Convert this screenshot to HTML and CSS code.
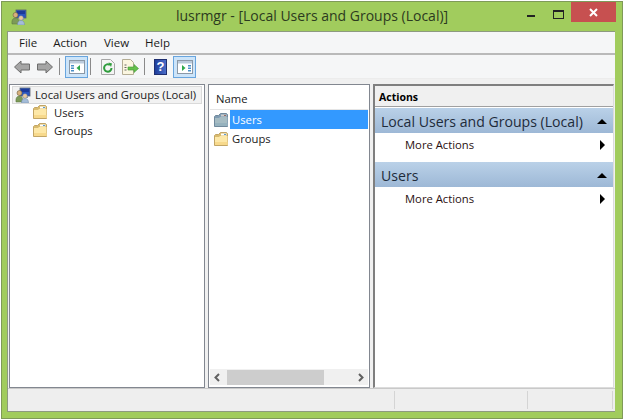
FILE: index.html
```html
<!DOCTYPE html>
<html lang="en">
<head>
    <meta charset="UTF-8">
    <title>lusrmgr</title>
    <link rel="stylesheet" href="styles.css">
</head>
<body>
    <svg class="defs" width="0" height="0">
        <defs>
            <symbol id="folder" viewBox="0 0 16 16">
                <path d="M1.500 14.500V4.500l1-1h3l2-2h6l1 1v12z" fill="#d9bb6e" stroke="#c2a565"/>
                <path d="M8 2.500h5.500v2H8z" fill="#fff"/>
                <path d="M11 3h2v1h-2z" fill="#5a9bd0"/>
                <path d="M2 14V6h4l1-1h7.500v9z" fill="#fde8a8"/>
                <path d="M2 14v-3h12.500v3z" fill="#f7d98c"/>
            </symbol>
            <symbol id="users" viewBox="0 0 16 16">
                <rect x="5" y="1" width="10" height="8" fill="#2a55c0" stroke="#55606e" stroke-width=".8"/>
                <rect x="6" y="2" width="8" height="3" fill="#1c3a9a"/>
                <rect x="8" y="9" width="5" height="2" fill="#8c97a4"/>
                <circle cx="4.500" cy="6" r="2.500" fill="#d8b07c" stroke="#6f5f40" stroke-width=".6"/>
                <path d="M1 15c-.5-4 1-6 3.500-6S8 11 8 15z" fill="#7d9a58" stroke="#55703c" stroke-width=".5"/>
                <circle cx="10" cy="9" r="2.300" fill="#e8c8a0" stroke="#7c8a98" stroke-width=".5"/>
                <path d="M6.500 16c0-3 1-4.500 3.500-4.500s3.500 1.500 3.500 4.500z" fill="#a4bcd8" stroke="#6e88a8" stroke-width=".5"/>
            </symbol>
        </defs>
    </svg>

    <div class="window">
        <div class="titlebar">
            <svg class="app-icon" width="16" height="16"><use href="#users"/></svg>
            <div class="title">lusrmgr - [Local Users and Groups (Local)]</div>
            <div class="caption-min"></div>
            <div class="caption-max"></div>
            <div class="caption-close">
                <svg width="9" height="9" viewBox="0 0 9 9"><path d="M1 1l7 7M8 1L1 8" stroke="#fff" stroke-width="2"/></svg>
            </div>
        </div>

        <div class="client">
            <div class="menubar">
                <span>File</span>
                <span>Action</span>
                <span>View</span>
                <span>Help</span>
            </div>

            <div class="toolbar">
                <svg width="18" height="16" viewBox="0 0 18 16"><path d="M1.500 8l6.500-6V5h8.500v6H8v3z" fill="#a5a5a5" stroke="#6d6d6d"/></svg>
                <svg class="tool-next" width="18" height="16" viewBox="0 0 18 16"><path d="M16.500 8L10 2V5H1.500v6H10v3z" fill="#a5a5a5" stroke="#6d6d6d"/></svg>
                <div class="sep"></div>
                <div class="tool-on">
                    <svg width="16" height="14" viewBox="0 0 16 14">
                        <rect x=".5" y=".5" width="15" height="13" fill="#fff" stroke="#8b98a6"/>
                        <rect x="1" y="1" width="14" height="2.500" fill="#bccbdc"/>
                        <path d="M2 5h3v1.500H2zM2 7.500h3V9H2zM2 10h3v1.500H2z" fill="#4a90c8"/>
                        <path d="M11 5v6L7.500 8z" fill="#2fa84a"/>
                    </svg>
                </div>
                <div class="sep sep-tight"></div>
                <svg class="tool-refresh" width="14" height="16" viewBox="0 0 14 16">
                    <path d="M.5.500h9l4 4v11H.5z" fill="#f4f4f4" stroke="#a6a6a6"/>
                    <path d="M10.500 9a3.700 3.700 0 1 1-1.500-3" fill="none" stroke="#2e9c3c" stroke-width="2"/>
                    <path d="M7.500 3.500l3.500 1-1 3.500z" fill="#2e9c3c"/>
                </svg>
                <svg class="tool-export" width="17" height="16" viewBox="0 0 17 16">
                    <path d="M.5.500h8l3 3v12H.5z" fill="#fbf6e0" stroke="#b4ad94"/>
                    <path d="M2.500 6h2M2.500 8.500h2M2.500 11h2" stroke="#666"/>
                    <path d="M16.500 9.500L12 5.500V8H6v3h6v2.500z" fill="#66c04c" stroke="#3f9a34" stroke-width=".6"/>
                </svg>
                <div class="sep"></div>
                <div class="help-btn">?</div>
                <div class="tool-on">
                    <svg width="16" height="14" viewBox="0 0 16 14">
                        <rect x=".5" y=".5" width="15" height="13" fill="#fff" stroke="#8b98a6"/>
                        <rect x="1" y="1" width="14" height="2.500" fill="#bccbdc"/>
                        <path d="M11 5h3v1.500h-3zM11 7.500h3V9h-3zM11 10h3v1.500h-3z" fill="#4a90c8"/>
                        <path d="M5 5v6L8.500 8z" fill="#2fa84a"/>
                    </svg>
                </div>
            </div>

            <div class="panes">
                <div class="pane tree">
                    <div class="tree-root">
                        <svg width="16" height="16"><use href="#users"/></svg>
                        <span>Local Users and Groups (Local)</span>
                    </div>
                    <div class="tree-item">
                        <svg width="16" height="16"><use href="#folder"/></svg>
                        <span>Users</span>
                    </div>
                    <div class="tree-item">
                        <svg width="16" height="16"><use href="#folder"/></svg>
                        <span>Groups</span>
                    </div>
                </div>

                <div class="pane list">
                    <div class="list-head">Name</div>
                    <div class="list-body">
                        <div class="list-row">
                            <svg class="folder-selected" width="16" height="16"><use href="#folder"/></svg>
                            <span class="selected">Users</span>
                        </div>
                        <div class="list-row">
                            <svg width="16" height="16"><use href="#folder"/></svg>
                            <span>Groups</span>
                        </div>
                    </div>
                    <div class="hscroll">
                        <svg width="8" height="9" viewBox="0 0 8 9"><path d="M6 1L2.500 4.500 6 8" fill="none" stroke="#606060" stroke-width="2"/></svg>
                        <div class="hscroll-track"><div class="hscroll-thumb"></div></div>
                        <svg width="8" height="9" viewBox="0 0 8 9"><path d="M2 1l3.500 3.500L2 8" fill="none" stroke="#606060" stroke-width="2"/></svg>
                    </div>
                </div>

                <div class="pane actions">
                    <div class="actions-head">Actions</div>
                    <div class="group-head">
                        <span>Local Users and Groups (Local)</span>
                        <div class="arrow-up"></div>
                    </div>
                    <div class="action-row">
                        <span>More Actions</span>
                        <div class="arrow-right"></div>
                    </div>
                    <div class="group-head group-second">
                        <span>Users</span>
                        <div class="arrow-up"></div>
                    </div>
                    <div class="action-row">
                        <span>More Actions</span>
                        <div class="arrow-right"></div>
                    </div>
                </div>
            </div>

            <div class="statusbar">
                <div class="status-main"></div>
                <div class="status-cell cell-a"></div>
                <div class="status-cell cell-b"></div>
                <div class="status-cell cell-c"></div>
            </div>
        </div>
    </div>
</body>
</html>
```

FILE: styles.css
```css
html, body {
    margin: 0;
    padding: 0;
    width: 624px;
    height: 420px;
    overflow: hidden;
    background: #fff;
}
body {
    font-family: "Open Sans", "Noto Sans", sans-serif;
    font-size: 11.25px;
    color: #1a1a1a;
}
.defs {
    display: block;
    height: 0;
}
.window {
    box-sizing: border-box;
    margin: 1px 0 0 1px;
    width: 622px;
    height: 418px;
    background: #a1cc5d;
    border: 1px solid #7f9a58;
    padding: 0 7px 6px 5px;
    display: flex;
    flex-direction: column;
}
.titlebar {
    height: 29px;
    display: flex;
    align-items: flex-start;
}
.app-icon {
    margin: 7px 0 0 4px;
}
.title {
    flex: 1;
    text-align: center;
    font-size: 14px;
    line-height: 27px;
    color: #2c3a20;
    padding-left: 70px;
}
.caption-min {
    width: 8px;
    height: 2px;
    background: #222;
    margin: 13px 18px 0 0;
}
.caption-max {
    box-sizing: border-box;
    width: 11px;
    height: 9px;
    border: 1px solid #222;
    border-top-width: 2px;
    margin: 8px 7px 0 0;
}
.caption-close {
    width: 45px;
    height: 20px;
    background: #c75050;
    display: flex;
    align-items: center;
    justify-content: center;
    margin-right: -1px;
}
.client {
    flex: 1;
    display: flex;
    flex-direction: column;
    background: #f0f0f0;
    border: 1px solid #8d9a80;
    border-width: 1px 0 1px 1px;
    min-height: 0;
}
.menubar {
    height: 21px;
    background: #f5f6f7;
    border-bottom: 2px solid #b9b9b9;
    display: flex;
    align-items: center;
    gap: 16px;
    padding-left: 11px;
    font-size: 11.5px;
}
.menubar span:nth-child(3) {
    margin-left: 1px;
}
.toolbar {
    height: 23px;
    background: #f5f6f7;
    display: flex;
    align-items: center;
    padding-left: 5px;
    border-bottom: 1px solid #ececec;
}
.tool-next {
    margin-left: 5px;
}
.tool-refresh {
    margin-left: 5px;
}
.tool-export {
    margin-left: 7px;
}
.sep {
    width: 1px;
    height: 17px;
    background: #8a8a8a;
    margin: 0 5px;
}
.sep-tight {
    margin-left: 2px;
}
.tool-on {
    box-sizing: border-box;
    width: 23px;
    height: 22px;
    background: #cce4f9;
    border: 1px solid #68a5de;
    display: flex;
    align-items: center;
    justify-content: center;
}
.help-btn {
    box-sizing: border-box;
    width: 13px;
    height: 16px;
    margin: 0 6px 0 4px;
    background: linear-gradient(90deg, #1f3f9c, #4a6cc8);
    border: 1px solid #1f2f70;
    color: #fff;
    font: bold 13px/14px "Liberation Sans", sans-serif;
    text-align: center;
}
.panes {
    flex: 1;
    display: flex;
    gap: 3px;
    padding: 5px 0 0 1px;
    min-height: 0;
}
.pane {
    box-sizing: border-box;
    background: #fff;
    border: 1px solid #828790;
}
.tree {
    width: 196px;
    padding: 1px 2px;
}
.tree-root {
    box-sizing: border-box;
    display: flex;
    align-items: center;
    gap: 4px;
    height: 18px;
    width: 190px;
    background: #f2f2f2;
    border: 1px solid #dadada;
    padding-left: 2px;
}
.tree-root span {
    margin-top: -1px;
}
.tree-item {
    box-sizing: border-box;
    display: flex;
    align-items: center;
    gap: 6px;
    height: 18px;
    padding: 0 0 2px 20px;
}
.list {
    width: 162px;
    display: flex;
    flex-direction: column;
}
.list-head {
    height: 24px;
    line-height: 27px;
    padding-left: 6px;
    border-bottom: 1px solid #e5e5e5;
    margin: 0 1px;
}
.list-body {
    flex: 1;
}
.list-row {
    display: flex;
    align-items: center;
    height: 19px;
    padding: 0 1px 0 4px;
}
.list-row span {
    flex: 1;
    height: 19px;
    line-height: 19px;
    margin-left: 1px;
    padding-left: 2px;
}
.list-row .selected {
    background: #3399ff;
    color: #fff;
}
.folder-selected {
    filter: hue-rotate(160deg) saturate(0.55) brightness(0.8);
}
.hscroll {
    height: 16px;
    margin: 0 1px 2px 1px;
    background: #f0f0f0;
    display: flex;
    align-items: center;
    padding: 0 3px;
}
.hscroll-track {
    flex: 1;
    height: 15px;
    padding-left: 6px;
}
.hscroll-thumb {
    width: 97px;
    height: 15px;
    background: #cdcdcd;
}
.actions {
    flex: 1;
    border: none;
    border-top: 2px solid #7f7f7f;
    border-left: 2px solid #7f7f7f;
    border-bottom: 1px solid #dcdcdc;
    border-right: 1px solid #dcdcdc;
    margin-right: 1px;
}
.actions-head {
    height: 20px;
    line-height: 22px;
    background: #f0f0f0;
    border-bottom: 1px solid #a0a0a0;
    margin-bottom: 1px;
    padding-left: 4px;
    font-weight: bold;
    font-size: 10.5px;
    color: #000;
}
.group-head {
    box-sizing: border-box;
    height: 25px;
    background: linear-gradient(#bad1e8, #9db8d6);
    display: flex;
    align-items: center;
    justify-content: space-between;
    padding: 2px 6px 0 6px;
    font-size: 14.1px;
    color: #1e2b3a;
}
.group-second {
    margin-top: 6px;
}
.action-row {
    height: 23px;
    display: flex;
    align-items: center;
    justify-content: space-between;
    padding: 0 8px 0 30px;
    color: #2a1010;
}
.arrow-up {
    width: 0;
    height: 0;
    border-left: 5px solid transparent;
    border-right: 5px solid transparent;
    border-bottom: 5px solid #000;
}
.arrow-right {
    width: 0;
    height: 0;
    border-top: 5px solid transparent;
    border-bottom: 5px solid transparent;
    border-left: 5px solid #000;
}
.statusbar {
    height: 23px;
    display: flex;
    background: #eeeeee;
    border-top: 1px solid #c9c9c9;
    padding: 2px 0;
    box-sizing: border-box;
}
.status-main {
    flex: 1;
}
.status-cell {
    border-left: 1px solid #d4d4d4;
}
.cell-a {
    width: 132px;
}
.cell-b {
    width: 84px;
}
.cell-c {
    width: 2px;
}
```
